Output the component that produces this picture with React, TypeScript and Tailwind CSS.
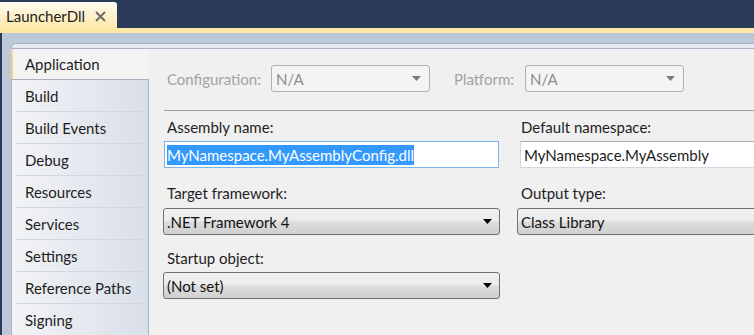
import React from "react";

const navItems = [
  "Build",
  "Build Events",
  "Debug",
  "Resources",
  "Services",
  "Settings",
  "Reference Paths",
  "Signing",
];

function Arrow({ disabled }: { disabled?: boolean }) {
  return (
    <svg width="9" height="5" viewBox="0 0 9 5" className="shrink-0">
      <path d="M0 0H9L4.5 5Z" fill={disabled ? "#7a7a7a" : "#000000"} />
    </svg>
  );
}

function DisabledSelect({ value, width }: { value: string; width: string }) {
  return (
    <div
      className={`${width} h-[27px] flex items-center justify-between pl-[4px] pr-[8px] border border-[#adb2b5] rounded-[3px] bg-[#f4f4f4] text-[#8d8d8d]`}
    >
      <span>{value}</span>
      <Arrow disabled />
    </div>
  );
}

function Combo({ value }: { value: string }) {
  return (
    <div className="h-[27px] flex items-center justify-between pl-[3px] pr-[7px] border border-[#707070] rounded-[3px] bg-[linear-gradient(to_bottom,#f2f2f2_0%,#ebebeb_48%,#dddddd_52%,#cfcfcf_100%)] text-[#111]">
      <span>{value}</span>
      <Arrow />
    </div>
  );
}

export default function App() {
  return (
    <div className="w-[754px] h-[335px] overflow-hidden bg-[#2b3a58] flex flex-col font-['Lato','Open_Sans',sans-serif] text-[15px] leading-[20px] text-[#1e1e1e]">
      {/* document tab strip */}
      <div className="h-[28px] shrink-0 flex items-end">
        <div className="w-[117px] h-[26px] rounded-tr-[3px] border-t border-[#fffdf6] bg-[linear-gradient(to_bottom,#fffcf2_0%,#fdf1cf_45%,#ffe9a9_100%)] flex items-center pl-[6px]">
          <span>LauncherDll</span>
          <svg width="11" height="11" viewBox="0 0 11 11" className="ml-[10px] mt-[1px]">
            <path d="M1 1L10 10M10 1L1 10" stroke="#6d6a62" strokeWidth="1.8" />
          </svg>
        </div>
      </div>
      <div className="h-[5px] shrink-0 bg-[#ffe8a6]" />

      {/* document frame */}
      <div className="flex-1 min-h-0 ml-[2px] bg-[#bcc7d8] pt-[10px] pl-[9px] flex flex-col">
        <div className="flex-1 min-h-0 rounded-tl-[5px] border-t border-l border-[#a8b2c4] bg-[#e6e9ee] pt-[4px] flex flex-col">
          <div className="flex-1 min-h-0 -ml-px border-t border-[#a8b2c4] bg-[#f0f0f0] flex">
            {/* left navigation */}
            <div className="w-[138px] shrink-0 flex flex-col">
              <div className="h-[30px] shrink-0 border-l-2 border-[#f2d48a] rounded-tl-[3px] bg-[#f3f3f3] flex items-center pl-[12px]">
                Application
              </div>
              <div className="flex-1 border-t border-l border-r border-[#a9b1bf] bg-[linear-gradient(to_right,#f2f3f6,#d9dfe9)] flex flex-col">
                {navItems.map((item) => (
                  <div key={item} className="h-[32px] shrink-0 ml-[4px] border-b border-[#d2d7df] flex items-center pl-[9px]">
                    {item}
                  </div>
                ))}
              </div>
            </div>

            {/* property page */}
            <div className="flex-1 min-w-0 pt-[16px] pl-[14px]">
              <div className="flex items-center">
                <span className="pl-[4px] w-[108px] text-[#a3a3a3]">Configuration:</span>
                <DisabledSelect value="N/A" width="w-[159px]" />
                <span className="ml-[24px] w-[71px] text-[#a3a3a3]">Platform:</span>
                <DisabledSelect value="N/A" width="w-[159px]" />
              </div>

              <div className="mt-[18px] ml-[1px] border-t border-[#a0a0a0]" />

              <div className="grid grid-cols-[337px_260px] gap-x-[17px]">
                <div className="flex flex-col">
                  <span className="mt-[6px] pl-[4px]">Assembly name:</span>
                  <div className="mt-[4px] mx-[1px] h-[27px] border border-[#7eb4ea] bg-white flex items-center pl-[2px]">
                    <span className="bg-[#3399ff] text-white">MyNamespace.MyAssemblyConfig.dll</span>
                  </div>
                  <span className="mt-[15px] pl-[4px]">Target framework:</span>
                  <div className="mt-[5px]">
                    <Combo value=".NET Framework 4" />
                  </div>
                  <span className="mt-[13px] pl-[4px]">Startup object:</span>
                  <div className="mt-[4px]">
                    <Combo value="(Not set)" />
                  </div>
                </div>
                <div className="flex flex-col">
                  <span className="mt-[6px] pl-[4px]">Default namespace:</span>
                  <div className="mt-[4px] ml-[3px] h-[27px] border border-[#d5d7dc] border-t-[#abadb3] bg-white flex items-center pl-[3px]">
                    MyNamespace.MyAssembly
                  </div>
                  <span className="mt-[15px] pl-[4px]">Output type:</span>
                  <div className="mt-[5px]">
                    <Combo value="Class Library" />
                  </div>
                </div>
              </div>
            </div>
          </div>
        </div>
      </div>
    </div>
  );
}
